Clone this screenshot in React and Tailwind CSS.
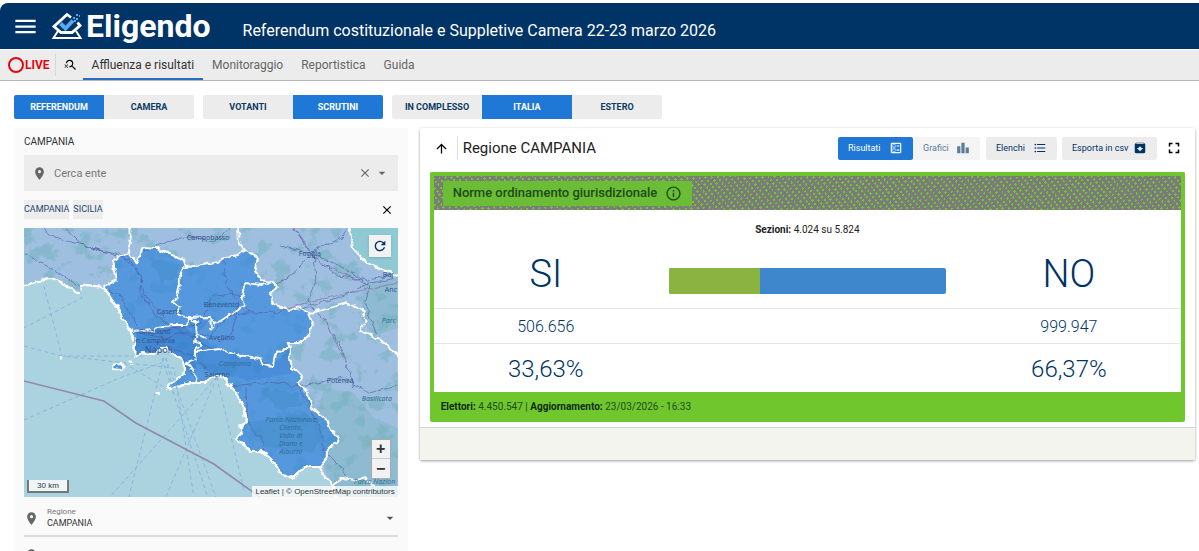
import React, { useState } from 'react';
import {
  MdMenu, MdSearchOff, MdPlace, MdClose, MdArrowDropDown, MdArrowUpward, MdInfoOutline,
  MdOutlineBallot, MdLeaderboard, MdFormatListBulleted, MdArchive, MdFullscreen, MdRefresh
} from 'react-icons/md';

const groups = [
  ['REFERENDUM', 'CAMERA'],
  ['VOTANTI', 'SCRUTINI'],
  ['IN COMPLESSO', 'ITALIA', 'ESTERO']
];

const navItems = ['Affluenza e risultati', 'Monitoraggio', 'Reportistica', 'Guida'];

const Logo = () => (
  <a href="#" className="flex items-center text-white">
    <svg viewBox="0 0 32 28" className="w-8 h-7" fill="none">
      <path d="M20 5.5L16 2.5L3 14.5L10 20.5H21L29 13.5L26.5 10.5" stroke="white" strokeWidth="2.8" />
      <path d="M7 19L2.5 26H29.5L25 19" stroke="white" strokeWidth="2" />
      <path d="M9.5 11.5L14.5 16.5L22 8.5" stroke="#5aa9f0" strokeWidth="4" />
      <path d="M22 5h2v2h-2z M25 6h2v2h-2z M25 2h2v2h-2z M28 3h1v2h-1z M23 8h2v2h-2z" fill="#5aa9f0" />
    </svg>
    <span className="ml-[3px] font-['Roboto',sans-serif] text-[32px] leading-10 font-bold">Eligendo</span>
  </a>
);

const Header = () => (
  <header className="mt-[3px] flex h-[46px] items-center rounded-tl-lg bg-[#003366] pl-3 text-white">
    <button aria-label="Menu" className="mr-3"><MdMenu className="size-[27px]" /></button>
    <Logo />
    <h1 className="ml-8 pt-[10px] text-[16px] leading-6">Referendum costituzionale e Suppletive Camera 22-23 marzo 2026</h1>
  </header>
);

const NavBar = () => (
  <nav className="mt-px flex h-[31px] items-stretch border-b border-[#b5b5b5] bg-[#ececec] pl-2 text-[12px]">
    <a href="#" className="flex items-center text-[12px] font-bold text-[#e30613]">
      <span className="mr-px size-4 rounded-full border-2 border-[#e30613]" />LIVE
    </a>
    <span className="my-1 ml-[5px] w-px bg-[#d8d8d8]" />
    <button aria-label="Cerca" className="pr-[5px] pl-2 text-black"><MdSearchOff className="size-[14px]" /></button>
    {navItems.map((item, i) => (
      <a
        key={item}
        href="#"
        className={`flex items-center px-[9px] pt-px ${i === 0 ? 'border-b-2 border-[#2a6cbf] text-[#333]' : 'pb-[2px] text-[#666]'}`}
      >
        {item}
      </a>
    ))}
  </nav>
);

// land shapes, in map pixels
const CAMPANIA = 'M79 59L86 67L93 79L100 92L107 104L111 117L110 129L118 125L129 126L136 121L143 121L150 126L159 131L161 136L161 145L152 152L145 156L143 162L156 158L169 155L181 155L187 150L193 147L199 149L211 162L221 182L223 194L216 200L217 206L211 212L219 215L225 223L238 223L248 232L254 239L256 245L269 250L281 239L296 239L304 229L304 220L314 215L315 210L306 202L303 192L288 180L284 165L274 156L278 149L268 139L266 130L266 120L264 115L276 115L286 105L289 94L285 85L276 80L266 82L258 80L248 74L246 65L254 59L249 54L238 52L231 44L233 29L221 22L214 27L203 29L195 34L179 37L163 39L161 32L143 25L133 20L119 19L114 35L106 29L104 24L89 32L93 52Z';
const SEA = 'M-6 61L11 54L24 50L36 54L49 62L56 65L57 59L64 57L79 59L86 67L93 79L100 92L107 104L111 117L110 129L118 125L129 126L136 121L143 121L150 126L159 131L161 136L161 145L152 152L145 156L143 162L156 158L169 155L181 155L187 150L193 147L199 149L211 162L221 182L223 194L216 200L217 206L211 212L219 215L225 223L238 223L248 232L254 239L256 245L269 250L281 239L296 239L300 248L309 257L314 280L-6 280Z';
const BORDERS = [
  'M163 39L159 41L156 47L156 57L153 70L148 74L156 79L154 87L166 90L186 89L187 98L198 92L209 85L222 77L218 69L221 55L238 57L249 54',
  'M109 104L129 102L133 99L150 97L163 97L166 90L172 94L173 107L171 114L177 116L171 122L171 124L196 121L213 127L236 130L239 137L249 139L251 127L261 120L266 120',
  'M171 124L172 132L163 135L173 149L171 155',
  'M173 107L182 110',
  'M106 -4L107 10L104 24',
  'M214 -4L215 14L221 22',
  'M285 85L296 83L306 80L323 75L338 82L343 94L336 102L354 110L362 116L378 132',
  'M309 257L319 250L332 252L343 250L350 258'
];
const ROADS = [
  'M20 0L30 10L60 17L106 32L118 50L117 66L130 85L145 97L170 110L190 122',
  'M0 25L30 42L55 58L79 60L98 70L110 92L114 102',
  'M119 24L140 15L165 8L190 14L205 0',
  'M40 0L60 18L100 28L116 48L121 68L142 90',
  'M110 104L140 110L160 104L185 108L205 88L222 85L255 84L285 78L320 68L345 55L374 50',
  'M270 0L290 30L315 48L345 52L374 45',
  'M325 0L316 12L290 22L292 50L284 74L300 92L315 115L325 140L330 160',
  'M257 18L290 26L330 45L345 58L342 75L352 105',
  'M290 22L270 45L250 59',
  'M186 148L210 158L235 155L255 154L272 158L290 156L318 149L345 165L374 158',
  'M222 160L224 195L238 212L240 222',
  'M272 158L284 174L296 200L300 222L318 240L325 252',
  'M130 120L145 100L175 97L188 68L215 66L225 84',
  'M200 30L202 55L215 76L208 105L195 115',
  'M150 122L170 128L188 146'
];
const FERRIES = [
  'M20 58L38 128L150 140L170 269', 'M38 128L0 118', 'M38 128L120 128', 'M0 100L58 70L56 62',
  'M140 130L105 269', 'M138 130L184 269', 'M142 130L192 269', 'M0 192L98 149L138 135',
  'M193 149L86 269', 'M193 149L142 269', 'M193 149L220 262', 'M100 135L150 165L142 130'
];
const PLACES = [
  [163, 12, 'Campobasso'], [275, 28, 'Foggia'], [180, 79, 'Benevento'], [133, 86, 'Caserta'],
  [185, 112, 'Avellino'], [303, 155, 'Potenza'], [359, 49, 'Bar'], [361, 64, 'Anc'],
  [181, 149, 'Salerno'], [115, 106, 'Giugliano'], [110, 115, 'in Campania']
];
const PARK_LABEL = ['Parco Nazionale', 'Cilento,', 'Vallo di', 'Diano e', 'Alburni'];

const MapDrawing = () => (
  <svg viewBox="0 0 374 269" preserveAspectRatio="xMidYMid slice" className="block h-full w-full font-['Noto_Sans',sans-serif]" fill="none">
    <defs>
      <filter id="rough" x="-5%" y="-5%" width="110%" height="110%" colorInterpolationFilters="sRGB">
        <feTurbulence type="fractalNoise" baseFrequency="0.14" numOctaves="2" seed="4" result="n" />
        <feDisplacementMap in="SourceGraphic" in2="n" scale="6" xChannelSelector="R" yChannelSelector="G" />
      </filter>
      <filter id="woods" x="0" y="0" width="100%" height="100%" colorInterpolationFilters="sRGB">
        <feTurbulence type="fractalNoise" baseFrequency="0.06" numOctaves="5" seed="11" />
        <feColorMatrix values="0 0 0 0 0.45  0 0 0 0 0.7  0 0 0 0 0.74  9 0 0 0 -4.9" />
      </filter>
    </defs>
    <rect width="374" height="269" fill="#9fbfe0" />
    <rect width="374" height="269" filter="url(#woods)" opacity="0.5" />
    <path d="M340 55L374 50V100L350 108L338 92Z M300 160L330 165L350 190L374 200V269H310L290 200Z" fill="#6fb3b8" opacity="0.35" />
    <g filter="url(#rough)">
      <path d={CAMPANIA} fill="#2a80dd" fillOpacity="0.62" />
      <path d="M125 30L155 36L152 50L138 54Z M235 160L275 165L278 178L255 182Z M222 195L280 185L300 200L290 225L240 218Z" fill="#2f84b8" fillOpacity="0.25" />
      <path d="M112 104L160 98L172 106L171 150L150 126L112 125Z" fill="#1763be" fillOpacity="0.3" />
      <path d="M166 90L186 92L173 107L196 121L236 130L249 139L266 118L268 145L230 152L190 145L173 135Z" fill="#1763be" fillOpacity="0.2" />
      {ROADS.map(d => <path key={d} d={d} stroke="#4d5fa6" strokeWidth="1" strokeOpacity="0.65" />)}
      <path d="M258 82L285 74L320 66L374 55 M270 0L295 35L345 57 M300 90L325 140" stroke="#8c5b9e" strokeOpacity="0.6" />
    </g>
    <g filter="url(#rough)" strokeLinejoin="round">
      <path d={SEA} fill="#aad3df" stroke="white" strokeWidth="2" />
      <path d="M325 -5L329 20L343 35L380 50V-5Z" fill="#8fc9d3" stroke="white" strokeWidth="2" />
      <path d={CAMPANIA} stroke="white" strokeWidth="2" />
      {BORDERS.map(d => <path key={d} d={d} stroke="white" strokeWidth="1.8" />)}
      <path d="M187 94L189 92L190 98L187 101Z" fill="#4f93d8" stroke="white" strokeWidth="1.5" />
      <path d="M91 136L98 135L101 138L98 142L89 141Z M130 165H136" fill="#4f93d8" stroke="white" strokeWidth="2" />
      <path d="M105 133L108 136 M37 128L40 128" stroke="white" strokeWidth="3" />
    </g>
    <g stroke="#82a8df" strokeWidth="1" strokeDasharray="4 3" opacity="0.75">
      {FERRIES.map(d => <path key={d} d={d} />)}
    </g>
    <path d="M0 153L80 173L112 195L190 236L236 269" stroke="#9089ad" strokeWidth="1.6" />
    <g fill="#33558e" fontSize="7">
      {PLACES.map(([x, y, name]) => <text key={name} x={x} y={y}>{name}</text>)}
      <text x="121" y="125" fontSize="9">Napoli</text>
    </g>
    <g fill="#2f6f96" fontSize="7" fontStyle="italic">
      <text x="195" y="138">Campania</text>
      <text x="338" y="173">Basilicata</text>
      <text x="358" y="95">Parc</text>
      <text x="330" y="256">Parco Nazion</text>
      {PARK_LABEL.map((line, i) => <text key={line} x="267" y={194 + i * 8} textAnchor="middle">{line}</text>)}
    </g>
  </svg>
);

const Sidebar = () => (
  <aside className="w-1/3 bg-[#fafafa] px-[10px] text-[11px] text-[#333]">
    <label htmlFor="ente" className="block pt-[5px] pb-1 text-[10px] leading-[18px]">CAMPANIA</label>
    <div className="flex h-9 items-center bg-[#ececec] px-2 text-[#666]">
      <MdPlace className="size-[15px]" />
      <input id="ente" placeholder="Cerca ente" className="ml-[7px] min-w-0 flex-1 bg-transparent pt-[2px] outline-none placeholder:text-[#777]" />
      <button aria-label="Cancella"><MdClose className="size-[14px]" /></button>
      <button aria-label="Apri" className="ml-[2px]"><MdArrowDropDown className="size-4" /></button>
    </div>
    <div className="flex h-[37px] items-center gap-1 text-[9px] text-[#24476f]">
      <a href="#" className="bg-[#ededed] leading-[19px]">CAMPANIA</a>
      <a href="#" className="bg-[#ededed] leading-[19px]">SICILIA</a>
      <button aria-label="Chiudi" className="mr-1 ml-auto text-black"><MdClose className="size-[14px]" /></button>
    </div>
    <div className="relative h-[269px] overflow-hidden">
      <MapDrawing />
      <button aria-label="Ricarica" className="absolute top-[7px] right-[7px] flex size-[22px] items-center justify-center bg-[#f2f2f2] text-[#003366] shadow"><MdRefresh className="size-4" /></button>
      <div className="absolute right-[7px] bottom-[18px] w-5 border border-[#aaa] bg-[#f2f2f2] text-center font-['Liberation_Sans',sans-serif] text-[16px] font-bold">
        <button aria-label="Zoom avanti" className="block h-[19px] w-full border-b border-[#ccc] leading-[18px]">+</button>
        <button aria-label="Zoom indietro" className="block h-[19px] w-full leading-[18px]">−</button>
      </div>
      <div className="absolute bottom-1 left-[3px] w-[42px] border-2 border-t-0 border-[#777] bg-white/80 text-center font-['Liberation_Sans',sans-serif] text-[8px] leading-[11px]">30 km</div>
      <div className="absolute right-0 bottom-0 bg-white/80 px-[3px] font-['Liberation_Sans',sans-serif] text-[8px] leading-[11px]">
        <a href="#">Leaflet</a> | © <a href="#">OpenStreetMap</a> contributors
      </div>
    </div>
    <button className="flex h-10 w-full items-center border-b-2 border-[#dcdcdc] text-left">
      <MdPlace className="mt-1 size-[15px] text-[#666]" />
      <span className="ml-2 flex-1 pt-[5px]">
        <span className="block text-[8px] leading-[10px] text-[#777]">Regione</span>
        <span className="block text-[9px] leading-[13px]">CAMPANIA</span>
      </span>
      <MdArrowDropDown className="mt-1 size-4 text-[#555]" />
    </button>
    <button aria-label="Provincia" className="flex h-9 w-full items-center">
      <MdPlace className="size-[15px] text-[#666]" />
    </button>
  </aside>
);

const ToolButton = ({ label, icon: Icon, className }) => (
  <button className={`flex h-[23px] items-center justify-between rounded-xs px-[10px] text-[9px] ${className}`}>
    <span className="pt-[2px]">{label}</span>
    <Icon className="size-[14px]" />
  </button>
);

const Results = () => (
  <table className="w-full table-fixed bg-white text-center text-[#003366]">
    <caption className="h-8 bg-white pt-[10px] text-[10px] leading-5 text-[#222]"><b>Sezioni:</b> 4.024 su 5.824</caption>
    <colgroup>
      <col className="w-[30%]" />
      <col className="w-[40%]" />
      <col className="w-[30%]" />
    </colgroup>
    <tbody>
      <tr className="h-[66px] border-b border-[#e4e4e4]">
        <th className="text-[38px] font-light">SI</th>
        <td className="px-[11px] pt-3">
          <div className="flex h-[26px] overflow-hidden rounded-xs bg-[#3f87cd]">
            <div className="bg-[#8ab341]" style={{ width: '33%' }} />
          </div>
        </td>
        <th className="text-[38px] font-light">NO</th>
      </tr>
      <tr className="h-[35px] border-b border-[#e4e4e4] text-[16px]">
        <td className="pt-[2px] font-light">506.656</td>
        <td />
        <td className="pt-[2px] font-light">999.947</td>
      </tr>
      <tr className="h-[49px] text-[24px]">
        <td className="pt-[3px] font-light">33,63%</td>
        <td />
        <td className="pt-[3px] font-light">66,37%</td>
      </tr>
    </tbody>
  </table>
);

const ResultsCard = () => (
  <section className="min-w-0 flex-1 rounded-xs bg-white shadow-[0_1px_3px_rgba(0,0,0,0.4)]">
    <div className="flex h-11 items-center pr-3 pb-1 pl-[14px]">
      <button aria-label="Torna su"><MdArrowUpward className="size-[15px]" /></button>
      <h2 className="ml-2 flex-1 border-l border-[#ddd] pl-[5px] text-[15px] leading-6 text-[#222]">Regione CAMPANIA</h2>
      <ToolButton label="Risultati" icon={MdOutlineBallot} className="w-[75px] bg-[#1f77d6] text-white" />
      <ToolButton label="Grafici" icon={MdLeaderboard} className="w-[67px] bg-[#f4f4f4] text-[#5d7b9b]" />
      <ToolButton label="Elenchi" icon={MdFormatListBulleted} className="ml-[6px] w-[71px] bg-[#ececec] text-[#003366]" />
      <ToolButton label="Esporta in csv" icon={MdArchive} className="ml-[5px] w-[95px] bg-[#ececec] text-[#003366]" />
      <button aria-label="Schermo intero" className="ml-2"><MdFullscreen className="size-[18px]" /></button>
    </div>
    <div className="mx-[10px] rounded-xs border-4 border-b-0 border-[#6fc72d] bg-[#6fc72d]">
      <div className="flex h-[34px] items-center bg-[repeating-linear-gradient(52deg,#7b7b7b_0_3px,transparent_3px_5px),repeating-linear-gradient(-45deg,#7b7b7b_0_2px,transparent_2px_4px)] pl-[9px]">
        <div className="flex h-[25px] items-center gap-2 bg-[#6abd35] px-[10px] text-[13px] font-medium text-[#1d4a17]">
          Norme ordinamento giurisdizionale
          <button aria-label="Informazioni"><MdInfoOutline className="size-[17px]" /></button>
        </div>
      </div>
      <Results />
      <p className="px-[7px] pt-[2px] pb-[2px] text-[10px] leading-[26px] text-[#1f4d12]">
        <b className="text-[#102a0a]">Elettori:</b> 4.450.547 | <b className="text-[#102a0a]">Aggiornamento:</b> 23/03/2026 - 16:33
      </p>
    </div>
    <div className="mt-[5px] h-[33px] border-t border-[#d5d5d5] bg-[#f4f4ee]" />
  </section>
);

const App = () => {
  const [active, setActive] = useState(['REFERENDUM', 'SCRUTINI', 'ITALIA']);

  const select = (index, label) => setActive(active.map((a, i) => (i === index ? label : a)));

  return (
    <div className="flow-root h-screen overflow-hidden bg-white font-['Roboto',sans-serif]">
      <Header />
      <NavBar />
      <div className="flex gap-[9px] px-[14px] pt-[14px]">
        {groups.map((labels, index) => (
          <div key={labels[0]} className="flex overflow-hidden rounded-xs">
            {labels.map(label => (
              <button
                key={label}
                onClick={() => select(index, label)}
                className={`h-6 w-[90px] pt-px text-[9px] font-bold ${active[index] === label ? 'bg-[#1f77d6] text-white' : 'bg-[#ececec] text-[#0b3a63]'}`}
              >
                {label}
              </button>
            ))}
          </div>
        ))}
      </div>
      <main className="flex items-start gap-3 pt-[9px] pr-1 pl-[14px]">
        <Sidebar />
        <ResultsCard />
      </main>
    </div>
  );
};

export default App;
